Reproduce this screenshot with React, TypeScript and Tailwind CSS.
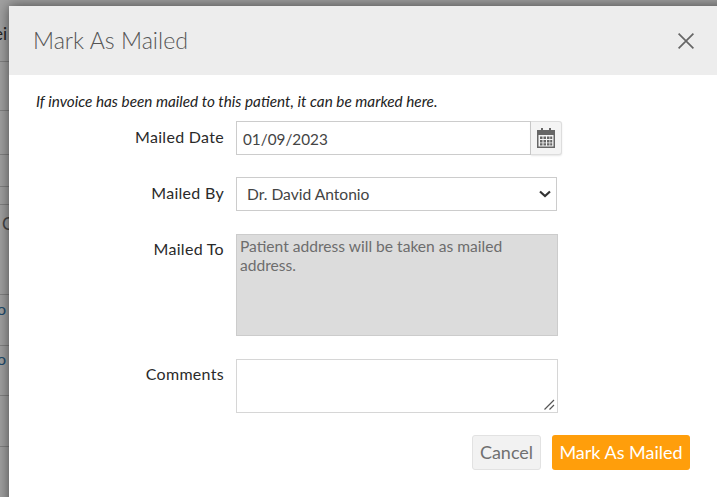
const rows: { h: number; text?: string; cls?: string }[] = [
  { h: 56, text: "ei", cls: "text-[17px] text-[#222] -ml-[6px] pt-[18px]" },
  { h: 49 },
  { h: 44 },
  { h: 32 },
  { h: 18 },
  { h: 90, text: "C", cls: "text-[17px] text-[#444] ml-[2px] pt-[9px]" },
  { h: 51, text: "o", cls: "text-[16px] text-[#1d4a6b] -ml-[3px] pt-[4px]" },
  { h: 50, text: "o", cls: "text-[16px] text-[#1d4a6b] -ml-[3px] pt-[3px]" },
  { h: 51 },
];

export default function App() {
  const font = "font-['Lato','Liberation_Sans',sans-serif]";
  const input = "border border-[#ccc] bg-white text-[#444] outline-none";
  const label = "w-[188px] text-right text-[16px] tracking-[0.3px] leading-5 text-[#2a2a2a]";
  return (
    <div className={`flex h-[497px] w-[717px] overflow-hidden bg-[#a0a0a0] pt-[6px] ${font}`}>
      {/* dimmed page behind the modal */}
      <div className="w-[9px] shrink-0 overflow-hidden">
        {rows.map((r, i) => (
          <div key={i} style={{ height: r.h }} className="box-border whitespace-nowrap border-b border-[#808080] leading-5">
            {r.text && <div className={r.cls}>{r.text}</div>}
          </div>
        ))}
      </div>

      <div className="h-[520px] w-[730px] shrink-0 bg-white shadow-[0_0_12px_rgba(0,0,0,0.55)]">
        <div className="flex h-[69px] items-center bg-[#ededed] pl-6">
          <h1 className="flex-1 text-[23.2px] font-light text-[#555]">Mark As Mailed</h1>
          <svg width="16" height="16" viewBox="0 0 16 16" className="mr-[45px] text-[#666]" fill="none" stroke="currentColor" strokeWidth="1.7">
            <path d="M0.6 0.6 15.4 15.4M15.4 0.6 0.6 15.4" />
          </svg>
        </div>

        <div className="pl-[27px] pt-[16px]">
          <p className="h-[30px] text-[15.3px] italic leading-5 text-[#222]">If invoice has been mailed to this patient, it can be marked here.</p>

          <div className="flex">
            <label className={`${label} pt-[6px]`}>Mailed Date</label>
            <div className="ml-3 flex h-[34px] w-[326px]">
              <input readOnly value="01/09/2023" className={`${input} h-full w-[295px] pl-[6px] pt-[1px] text-[15.3px]`} />
              <div className="flex w-[31px] items-center justify-center rounded-r-[3px] border border-l-0 border-[#ddd] bg-[#f4f4f4] shadow-[0_1px_2px_rgba(0,0,0,0.1)]">
                <svg width="18" height="20" viewBox="0 0 18 20" fill="#666">
                  <path d="M4 0h2v3H4zM12 0h2v3h-2z" />
                  <path fillRule="evenodd" d="M0 2h18v18H0zM1.5 7v11.5h15V7z" />
                  <path d="M3 8.5h2.5V11H3zM6.5 8.5H9V11H6.5zM10 8.5h2.5V11H10zM13.2 8.5h2V11h-2zM3 12h2.5v2.5H3zM6.5 12H9v2.5H6.5zM10 12h2.5v2.5H10zM13.2 12h2v2.5h-2zM3 15.2h2.5V17.5H3zM6.5 15.2H9V17.5H6.5zM10 15.2h2.5V17.5H10zM13.2 15.2h2V17.5h-2z" />
                </svg>
              </div>
            </div>
          </div>

          <div className="mt-[22px] flex">
            <label className={`${label} pt-[6px]`}>Mailed By</label>
            <div className="relative ml-3 h-[34px] w-[321px]">
              <select defaultValue="a" className={`${input} h-full w-full appearance-none pl-[10px] pt-[1px] text-[15.6px]`}>
                <option value="a">Dr. David Antonio</option>
              </select>
              <svg width="12" height="8" viewBox="0 0 12 8" fill="none" stroke="#333" strokeWidth="2.2" className="pointer-events-none absolute right-[6px] top-[13px]">
                <path d="M1 1.5 6 6l5-4.5" />
              </svg>
            </div>
          </div>

          <div className="mt-[23px] flex">
            <label className={`${label} pt-[5px]`}>Mailed To</label>
            <textarea disabled value="Patient address will be taken as mailed address." className="ml-3 h-[102px] w-[322px] resize-none border border-[#ccc] bg-[#dcdcdc] py-[2px] pl-[3px] pr-[30px] text-[15.6px] leading-[19px] text-[#6d6d6d] outline-none" />
          </div>

          <div className="mt-[23px] flex">
            <label className={`${label} pt-[5px]`}>Comments</label>
            <div className="relative ml-3 h-[54px] w-[322px]">
              <textarea className="block h-full w-full resize-none border border-[#d6d6d6] bg-white outline-none" />
              <svg width="11" height="11" viewBox="0 0 11 11" fill="none" stroke="#555" strokeWidth="1.2" className="pointer-events-none absolute bottom-[3px] right-[3px]">
                <path d="M0.5 10.5 10 1M5.5 10.5 10 6" />
              </svg>
            </div>
          </div>

          <div className="mt-[22px] flex w-[654px] justify-end gap-[11px]">
            <button className="h-[35px] w-[69px] rounded-[3px] border border-[#e2e2e2] bg-[#f2f2f2] text-[18px] text-[#707070]">Cancel</button>
            <button className="h-[35px] w-[138px] rounded-[3px] bg-[#ff9e0b] text-[18px] text-white">Mark As Mailed</button>
          </div>
        </div>
      </div>
    </div>
  );
}
